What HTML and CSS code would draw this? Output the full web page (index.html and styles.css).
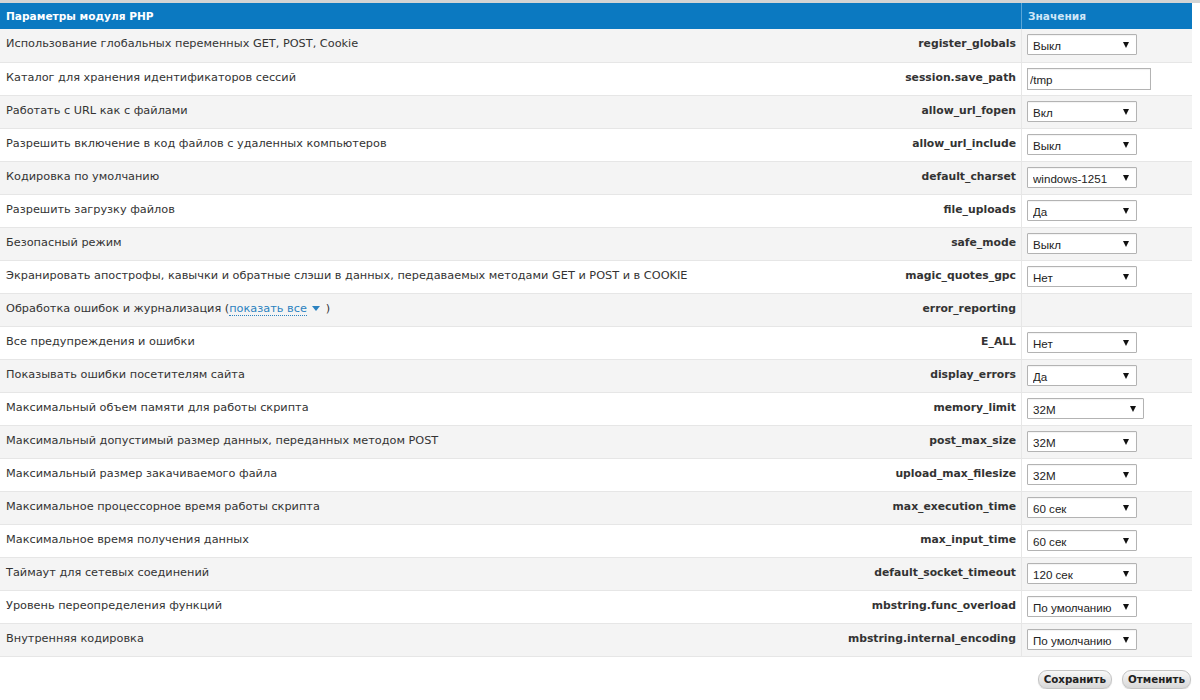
FILE: index.html
```html
<!DOCTYPE html>
<html lang="ru">
<head>
<meta charset="utf-8">
<title>Параметры модуля PHP</title>
<link rel="stylesheet" href="styles.css">
</head>
<body>
<div class="page">
<table class="params">
  <thead>
    <tr>
      <th class="h-name" colspan="2">Параметры модуля PHP</th>
      <th class="h-val">Значения</th>
    </tr>
  </thead>
  <tbody>
    <tr><td class="desc">Использование глобальных переменных GET, POST, Cookie</td><td class="key">register_globals</td><td class="val"><span class="sel"><select><option>Выкл</option></select></span></td></tr>
    <tr><td class="desc">Каталог для хранения идентификаторов сессий</td><td class="key">session.save_path</td><td class="val"><input class="txt" type="text" value="/tmp"></td></tr>
    <tr><td class="desc">Работать с URL как с файлами</td><td class="key">allow_url_fopen</td><td class="val"><span class="sel"><select><option>Вкл</option></select></span></td></tr>
    <tr><td class="desc">Разрешить включение в код файлов с удаленных компьютеров</td><td class="key">allow_url_include</td><td class="val"><span class="sel"><select><option>Выкл</option></select></span></td></tr>
    <tr><td class="desc">Кодировка по умолчанию</td><td class="key">default_charset</td><td class="val"><span class="sel"><select><option>windows-1251</option></select></span></td></tr>
    <tr><td class="desc">Разрешить загрузку файлов</td><td class="key">file_uploads</td><td class="val"><span class="sel"><select><option>Да</option></select></span></td></tr>
    <tr><td class="desc">Безопасный режим</td><td class="key">safe_mode</td><td class="val"><span class="sel"><select><option>Выкл</option></select></span></td></tr>
    <tr><td class="desc">Экранировать апострофы, кавычки и обратные слэши в данных, передаваемых методами GET и POST и в COOKIE</td><td class="key">magic_quotes_gpc</td><td class="val"><span class="sel"><select><option>Нет</option></select></span></td></tr>
    <tr><td class="desc">Обработка ошибок и журнализация (<a class="more" href="#">показать все</a><span class="tri"></span>)</td><td class="key">error_reporting</td><td class="val"></td></tr>
    <tr><td class="desc">Все предупреждения и ошибки</td><td class="key">E_ALL</td><td class="val"><span class="sel"><select><option>Нет</option></select></span></td></tr>
    <tr><td class="desc">Показывать ошибки посетителям сайта</td><td class="key">display_errors</td><td class="val"><span class="sel"><select><option>Да</option></select></span></td></tr>
    <tr><td class="desc">Максимальный объем памяти для работы скрипта</td><td class="key">memory_limit</td><td class="val"><span class="sel wide"><select><option>32M</option></select></span></td></tr>
    <tr><td class="desc">Максимальный допустимый размер данных, переданных методом POST</td><td class="key">post_max_size</td><td class="val"><span class="sel"><select><option>32M</option></select></span></td></tr>
    <tr><td class="desc">Максимальный размер закачиваемого файла</td><td class="key">upload_max_filesize</td><td class="val"><span class="sel"><select><option>32M</option></select></span></td></tr>
    <tr><td class="desc">Максимальное процессорное время работы скрипта</td><td class="key">max_execution_time</td><td class="val"><span class="sel"><select><option>60 сек</option></select></span></td></tr>
    <tr><td class="desc">Максимальное время получения данных</td><td class="key">max_input_time</td><td class="val"><span class="sel"><select><option>60 сек</option></select></span></td></tr>
    <tr><td class="desc">Таймаут для сетевых соединений</td><td class="key">default_socket_timeout</td><td class="val"><span class="sel"><select><option>120 сек</option></select></span></td></tr>
    <tr><td class="desc">Уровень переопределения функций</td><td class="key">mbstring.func_overload</td><td class="val"><span class="sel"><select><option>По умолчанию</option></select></span></td></tr>
    <tr><td class="desc">Внутренняя кодировка</td><td class="key">mbstring.internal_encoding</td><td class="val"><span class="sel"><select><option>По умолчанию</option></select></span></td></tr>
  </tbody>
</table>
<div class="actions">
  <button class="btn" type="button">Сохранить</button>
  <button class="btn" type="button">Отменить</button>
</div>
</div>
</body>
</html>
```

FILE: styles.css
```css
html, body {
  margin: 0;
  padding: 0;
  background: #fff;
}
body {
  border-top: 3px solid #d4d4d4;
  font-family: "DejaVu Sans", Verdana, sans-serif;
  color: #333;
}
.page {
  width: 1192px;
}
.params {
  width: 1192px;
  border-collapse: collapse;
  table-layout: fixed;
  font-size: 11.3px;
}
.params thead th {
  background: #0b79c1;
  height: 26px;
  padding: 0 6px;
  text-align: left;
  font-weight: bold;
  font-size: 10.6px;
  vertical-align: middle;
}
.h-name {
  color: #fff;
}
.h-val {
  color: #cfe6f7;
  width: 158px;
  border-left: 1px solid #5aa6d8;
}
.params tbody tr {
  height: 33px;
}
.params tbody tr:nth-child(odd) td {
  background: #f4f4f4;
}
.params tbody tr:nth-child(even) td {
  background: #fff;
}
.params td {
  border-bottom: 1px solid #e6e6e6;
  vertical-align: top;
  padding: 8px 0 4px;
  line-height: 14px;
}
.desc {
  padding-left: 6px !important;
  width: 700px;
  white-space: nowrap;
}
.key {
  text-align: right;
  font-weight: bold;
  font-size: 10.8px;
  padding-right: 5px !important;
  width: 320px;
  white-space: nowrap;
}
.val {
  border-left: 1px solid #e6e6e6;
  padding: 5px 0 4px 5px !important;
}
.sel {
  position: relative;
  display: inline-block;
}
.sel select {
  -webkit-appearance: none;
  appearance: none;
  width: 110px;
  height: 21px;
  border: 1px solid #b3b3b3;
  border-radius: 1px;
  background: #fff;
  font-family: "Liberation Sans", Arial, sans-serif;
  font-size: 11.6px;
  color: #222;
  padding: 2px 0 0 5px;
  margin: 0;
  box-shadow: inset 0 1px 1px rgba(0,0,0,0.05);
}
.sel.wide select {
  width: 117px;
}
.sel::after {
  content: "";
  position: absolute;
  right: 8px;
  top: 8px;
  border-left: 3px solid transparent;
  border-right: 3px solid transparent;
  border-top: 6px solid #111;
  pointer-events: none;
}
.txt {
  width: 124px;
  height: 22px;
  box-sizing: border-box;
  border: 1px solid #b3b3b3;
  font-family: "Liberation Sans", Arial, sans-serif;
  font-size: 11.6px;
  color: #222;
  padding: 1px 2px 0;
  margin: 0;
  box-shadow: inset 0 1px 1px rgba(0,0,0,0.06);
}
.more {
  color: #2b82c0;
  text-decoration: none;
  border-bottom: 1px dotted #2b82c0;
}
.tri {
  display: inline-block;
  width: 0;
  height: 0;
  margin: 0 6px 1px 5px;
  border-left: 4px solid transparent;
  border-right: 4px solid transparent;
  border-top: 5px solid #2b82c0;
  vertical-align: middle;
}
.actions {
  display: flex;
  justify-content: flex-end;
  gap: 10px;
  padding: 13px 1px 0 0;
}
.btn {
  font-family: "DejaVu Sans", Verdana, sans-serif;
  font-weight: bold;
  font-size: 10.3px;
  color: #222;
  height: 19px;
  padding: 0 5px;
  border: 1px solid #c4c4c4;
  border-radius: 9px;
  background: linear-gradient(#f8f8f8, #d8d8d8);
  box-shadow: 0 1px 1px rgba(0,0,0,0.15);
  line-height: 17px;
}
```
